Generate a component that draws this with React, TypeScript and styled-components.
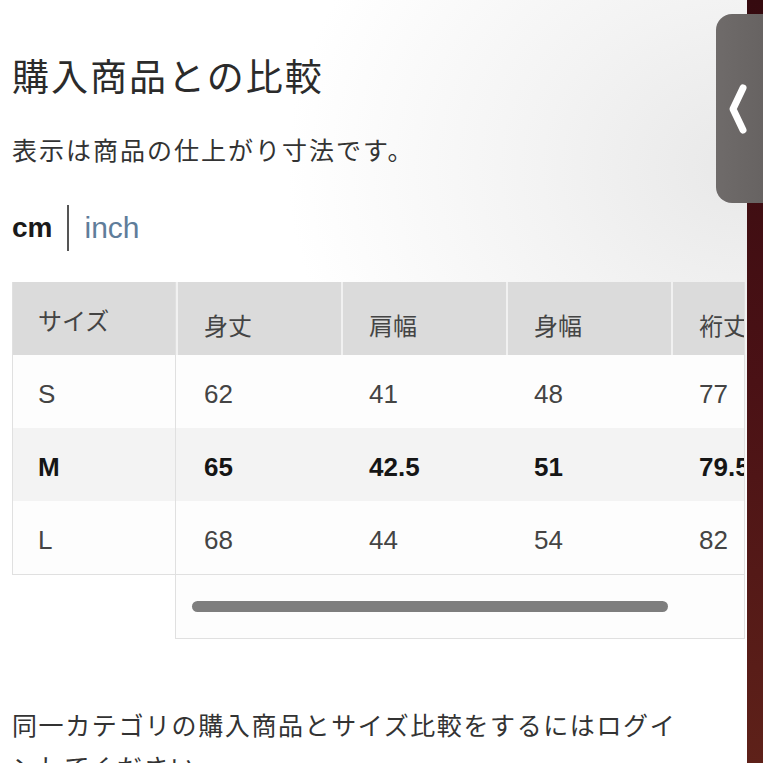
import styled, { createGlobalStyle } from "styled-components";

const GlobalStyle = createGlobalStyle`
  html, body {
    margin: 0;
    padding: 0;
    width: 763px;
    height: 763px;
    overflow: hidden;
    font-family: "Liberation Sans", "Noto Sans CJK JP", sans-serif;
    color: #333;
  }
`;

const columns = ["身丈", "肩幅", "身幅", "裄丈"];

const rows = [
  { size: "S", values: ["62", "41", "48", "77"], active: false },
  { size: "M", values: ["65", "42.5", "51", "79.5"], active: true },
  { size: "L", values: ["68", "44", "54", "82"], active: false },
];

export default function App() {
  return (
    <>
      <GlobalStyle />
      <Page>
        <Main>
          <Title>購入商品との比較</Title>
          <Note>表示は商品の仕上がり寸法です。</Note>
          <UnitSwitch>
            <Unit $active>cm</Unit>
            <Divider />
            <Unit>inch</Unit>
          </UnitSwitch>
          <TableWrap>
            <FixedCol>
              <HeadCell>サイズ</HeadCell>
              {rows.map((r) => (
                <BodyCell key={r.size} $active={r.active}>
                  {r.size}
                </BodyCell>
              ))}
            </FixedCol>
            <ScrollArea>
              <ScrollTable>
                <Row>
                  {columns.map((c) => (
                    <HeadCell key={c} $sep>
                      {c}
                    </HeadCell>
                  ))}
                </Row>
                {rows.map((r) => (
                  <Row key={r.size}>
                    {r.values.map((v, i) => (
                      <BodyCell key={i} $active={r.active} $sep>
                        {v}
                      </BodyCell>
                    ))}
                  </Row>
                ))}
              </ScrollTable>
              <Track>
                <Thumb />
              </Track>
            </ScrollArea>
          </TableWrap>
          <LoginNote>
            同一カテゴリの購入商品とサイズ比較をするにはログインしてください。
          </LoginNote>
        </Main>
        <Strip />
        <Handle>
          <Chevron width="20" height="52" viewBox="0 0 20 52" fill="none">
            <path
              d="M15 5 L5 26 L15 47"
              stroke="#fff"
              strokeWidth="7"
              strokeLinecap="round"
              strokeLinejoin="round"
            />
          </Chevron>
        </Handle>
      </Page>
    </>
  );
}

const Page = styled.div`
  position: relative;
  display: flex;
  width: 763px;
  height: 763px;
  overflow: hidden;
`;

const Main = styled.div`
  flex: 1;
  min-width: 0;
  padding: 55px 0 0 12px;
  background: radial-gradient(
    ellipse 460px 380px at 100% 22%,
    #e8e8e8 0%,
    #f3f3f3 45%,
    #ffffff 100%
  );
`;

const Strip = styled.div`
  width: 16px;
  background: linear-gradient(180deg, #350a0f 0%, #4a1115 50%, #5e2119 100%);
`;

const Handle = styled.div`
  position: absolute;
  top: 14px;
  right: 0;
  width: 47px;
  height: 189px;
  border-radius: 16px 0 0 16px;
  background: linear-gradient(90deg, #6f6b6a 0%, #676362 100%);
  display: flex;
  align-items: center;
  justify-content: center;
  padding-right: 3px;
  box-sizing: border-box;
`;

const Chevron = styled.svg`
  flex-shrink: 0;
  display: block;
`;

const Title = styled.h1`
  margin: 0;
  font-size: 37px;
  font-weight: 400;
  letter-spacing: 2px;
  line-height: 48px;
  color: #2b2b2b;
`;

const Note = styled.p`
  margin: 32px 0 0;
  font-size: 25px;
  line-height: 32px;
  letter-spacing: 2px;
  color: #333;
`;

const UnitSwitch = styled.div`
  display: flex;
  align-items: center;
  margin-top: 37px;
  height: 48px;
`;

const Unit = styled.span<{ $active?: boolean }>`
  font-size: ${(p) => (p.$active ? "28px" : "30px")};
  font-weight: ${(p) => (p.$active ? 700 : 400)};
  color: ${(p) => (p.$active ? "#1a1a1a" : "#5f7d9a")};
`;

const Divider = styled.span`
  width: 2px;
  height: 46px;
  margin: 0 15px 0 15px;
  background: #555;
`;

const TableWrap = styled.div`
  display: flex;
  align-items: flex-start;
  margin-top: 30px;
`;

const FixedCol = styled.div`
  width: 163px;
  flex-shrink: 0;
  border-left: 1px solid #e0e0e0;
  border-bottom: 1px solid #e0e0e0;
  box-sizing: border-box;
`;

const ScrollArea = styled.div`
  flex: 1;
  min-width: 0;
  overflow: hidden;
  border: 1px solid #e0e0e0;
  border-top: none;
  margin-right: 2px;
`;

const ScrollTable = styled.div`
  display: flex;
  flex-direction: column;
  width: max-content;
  border-bottom: 1px solid #e0e0e0;
`;

const Row = styled.div`
  display: flex;
`;

const HeadCell = styled.div<{ $sep?: boolean }>`
  width: ${(p) => (p.$sep ? "165px" : "auto")};
  height: 73px;
  box-sizing: border-box;
  display: flex;
  align-items: center;
  padding-left: ${(p) => (p.$sep ? "26px" : "25px")};
  padding-top: ${(p) => (p.$sep ? "12px" : "2px")};
  background: #dbdbdb;
  border-left: ${(p) => (p.$sep ? "2px solid #f1f1f1" : "none")};
  font-size: 24px;
  color: #444;
`;

const BodyCell = styled.div<{ $active?: boolean; $sep?: boolean }>`
  width: ${(p) => (p.$sep ? "165px" : "auto")};
  height: 73px;
  box-sizing: border-box;
  display: flex;
  align-items: center;
  padding-left: ${(p) => (p.$sep ? "26px" : "25px")};
  padding-top: 6px;
  background: ${(p) => (p.$active ? "#f3f3f3" : "#fdfdfd")};
  border-left: ${(p) => (p.$sep ? "2px solid transparent" : "none")};
  font-size: 26px;
  font-weight: ${(p) => (p.$active ? 700 : 400)};
  color: ${(p) => (p.$active ? "#151515" : "#444")};
`;

const Track = styled.div`
  height: 63px;
  display: flex;
  align-items: center;
  padding-left: 16px;
  background: #fdfdfd;
`;

const Thumb = styled.div`
  width: 476px;
  height: 11px;
  border-radius: 6px;
  background: #7e7e7e;
`;

const LoginNote = styled.p`
  margin: 66px 0 0;
  width: 680px;
  font-size: 25px;
  line-height: 42px;
  letter-spacing: 1.6px;
  color: #333;
`;
